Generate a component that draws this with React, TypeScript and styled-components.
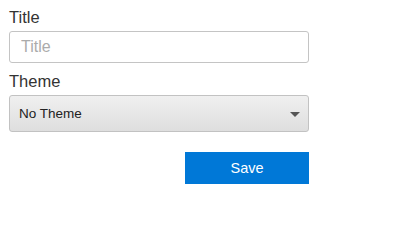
import React from 'react';
import styled, { createGlobalStyle } from 'styled-components';

const GlobalStyle = createGlobalStyle`
  body {
    margin: 0;
    background: #fff;
    font-family: 'Liberation Sans', Arial, sans-serif;
  }
`;

const Form = styled.form`
  width: 300px;
  padding: 8px 0 0 9px;
  display: flex;
  flex-direction: column;
`;

const Label = styled.label`
  font-size: 16.5px;
  line-height: 19px;
  color: #333;
  margin-bottom: 4px;
`;

const TextInput = styled.input`
  box-sizing: border-box;
  height: 32px;
  width: 100%;
  margin: 0 0 9px;
  padding: 0 11px;
  border: 1px solid #c4c4c4;
  border-radius: 3px;
  font-family: inherit;
  font-size: 16px;
  color: #333;
  &::placeholder {
    color: #ababab;
  }
`;

const SelectWrap = styled.div`
  position: relative;
  height: 37px;
  margin-bottom: 20px;
`;

const Select = styled.select`
  appearance: none;
  box-sizing: border-box;
  width: 100%;
  height: 100%;
  padding: 0 28px 0 9px;
  border: 1px solid #c2c2c2;
  border-radius: 3px;
  background: linear-gradient(#f0f0f0, #dedede);
  font-family: inherit;
  font-size: 13.5px;
  color: #222;
`;

const Caret = styled.span`
  position: absolute;
  right: 9px;
  top: 17px;
  width: 0;
  height: 0;
  border-left: 5px solid transparent;
  border-right: 5px solid transparent;
  border-top: 5px solid #555;
  pointer-events: none;
`;

const Actions = styled.div`
  display: flex;
  justify-content: flex-end;
`;

const SaveButton = styled.button`
  width: 124px;
  height: 32px;
  border: none;
  background: #0078d7;
  color: #fff;
  font-family: inherit;
  font-size: 14.5px;
`;

export default function App() {
  return (
    <>
      <GlobalStyle />
      <Form onSubmit={e => e.preventDefault()}>
        <Label htmlFor="title">Title</Label>
        <TextInput id="title" placeholder="Title" />
        <Label htmlFor="theme">Theme</Label>
        <SelectWrap>
          <Select id="theme" defaultValue="none">
            <option value="none">No Theme</option>
          </Select>
          <Caret />
        </SelectWrap>
        <Actions>
          <SaveButton type="submit">Save</SaveButton>
        </Actions>
      </Form>
    </>
  );
}
